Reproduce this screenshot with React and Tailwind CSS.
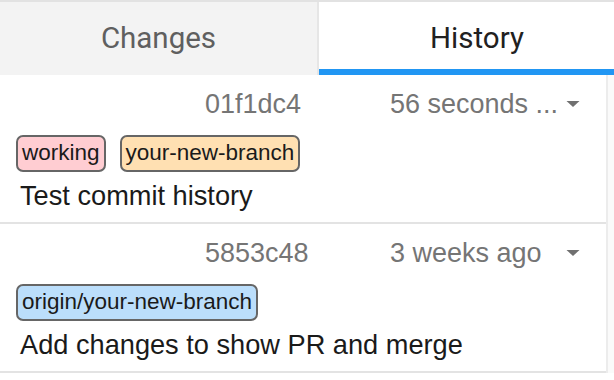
import React from 'react';

const commits = [
  {
    sha: '01f1dc4',
    date: '56 seconds ...',
    refs: [
      { name: 'working', className: 'bg-[#ffcdd2]' },
      { name: 'your-new-branch', className: 'bg-[#ffe0b2]' },
    ],
    message: 'Test commit history',
  },
  {
    sha: '5853c48',
    date: '3 weeks ago',
    refs: [{ name: 'origin/your-new-branch', className: 'bg-[#bbdefb]' }],
    message: 'Add changes to show PR and merge',
  },
];

const Caret = () => (
  <svg width="14" height="6" viewBox="0 0 14 6" className="fill-[#707070]">
    <path d="M0.5 0 L13.5 0 L7 6 Z" />
  </svg>
);

const CommitRow = ({ commit }) => (
  <div className="border-b-2 border-[#e3e3e3] pl-4 pr-[26px] pt-[9px] pb-[10px]">
    <div className="grid h-[32px] grid-cols-[189px_185px_1fr_auto] items-center text-[27px] text-[#757575]">
      <span />
      <span>{commit.sha}</span>
      <span className="whitespace-nowrap">{commit.date}</span>
      <Caret />
    </div>
    <div className="mt-[19px] flex h-[37px] gap-[14px]">
      {commit.refs.map((ref) => (
        <span
          key={ref.name}
          className={`flex items-center rounded-[7px] border-2 border-[#666666] px-[4px] text-[22.5px] leading-none text-[#1a1a1a] ${ref.className}`}
        >
          {ref.name}
        </span>
      ))}
    </div>
    <div className="mt-[8px] flex h-[32px] items-center pl-[4px] text-[27.2px] text-[#1a1a1a]">
      {commit.message}
    </div>
  </div>
);

export default function App() {
  return (
    <div className="h-[380px] w-[614px] overflow-hidden bg-white font-['Liberation_Sans',Arial,sans-serif]">
      <div className="h-[2px] bg-[#e2e2e2]" />
      <div className="flex h-[73px] font-['Roboto',sans-serif] text-[29.5px]">
        <div className="flex w-[317px] items-center justify-center bg-[#f3f3f3] text-[#5f5f5f]">
          Changes
        </div>
        <div className="w-[2px] bg-[#e6e6e6]" />
        <div className="flex flex-1 items-center justify-center border-b-[6px] border-[#2196f3] pl-[21px] pt-[6px] text-[#212121]">
          History
        </div>
      </div>
      <div className="flex">
        <div className="w-[608px] border-r-2 border-[#ececec]">
          {commits.map((c) => (
            <CommitRow key={c.sha} commit={c} />
          ))}
        </div>
        <div className="flex-1 bg-[#fafafa]" />
      </div>
    </div>
  );
}
